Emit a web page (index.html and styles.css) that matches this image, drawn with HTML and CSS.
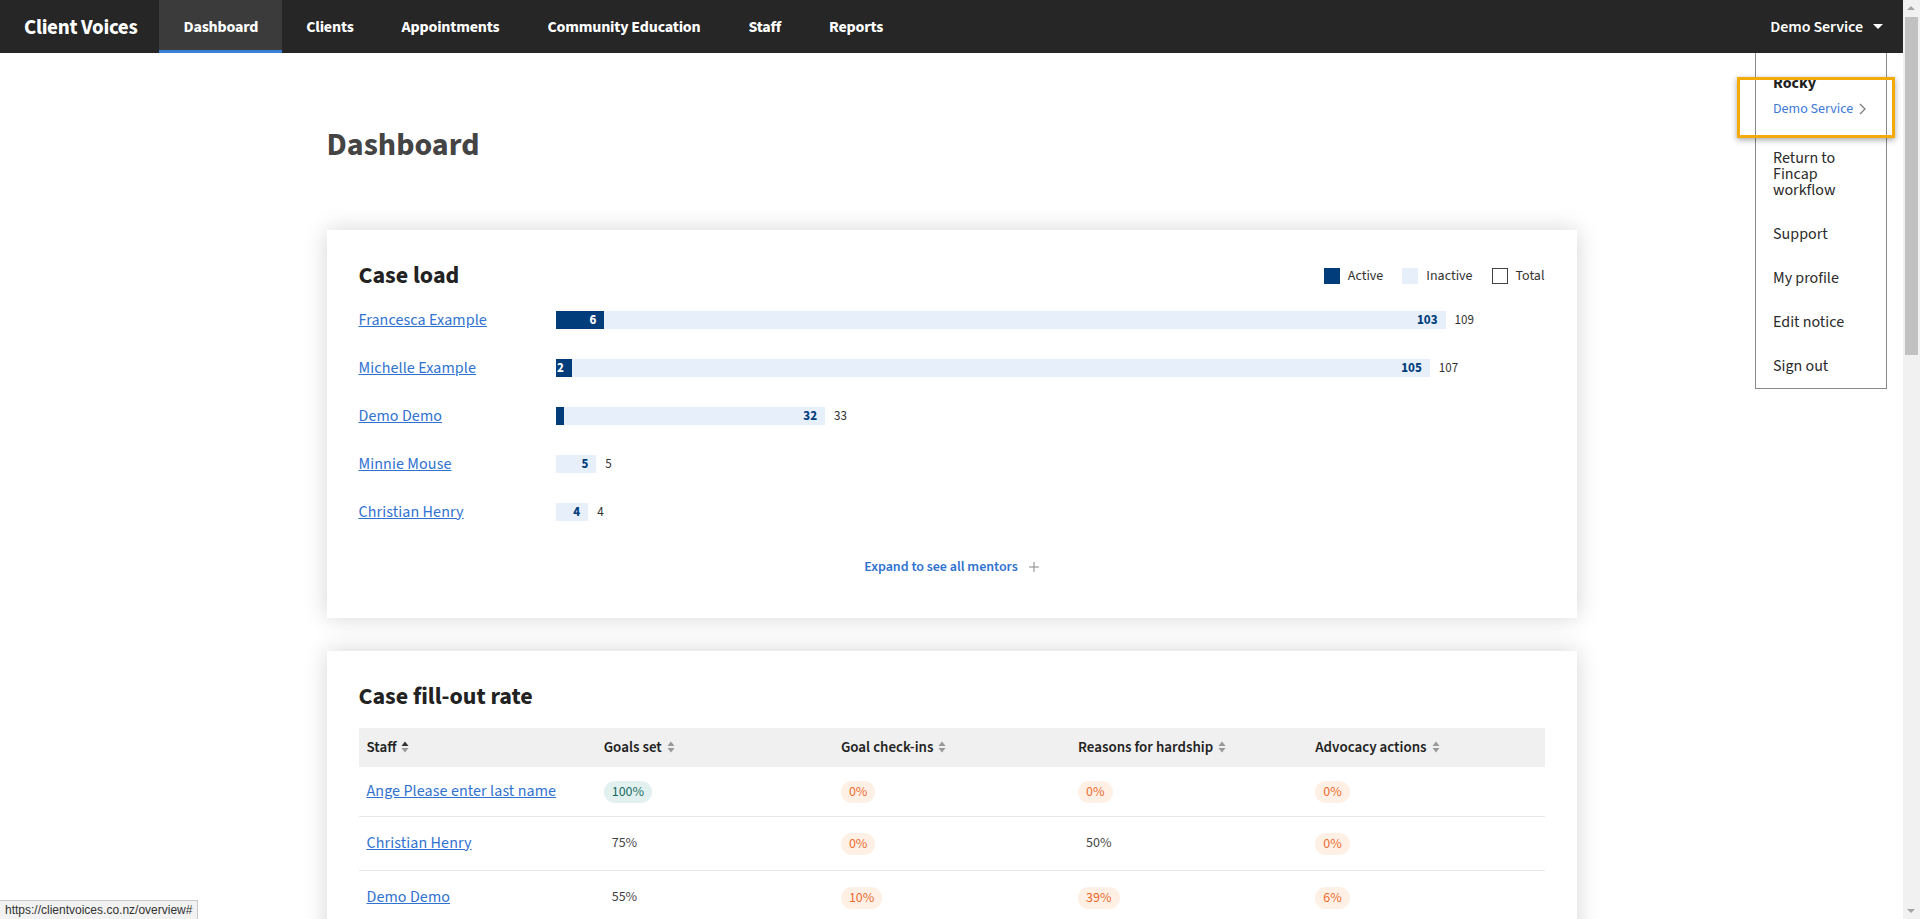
FILE: index.html
```html
<!DOCTYPE html>
<html lang="en">
<head>
<meta charset="utf-8">
<title>Dashboard - Client Voices</title>
<link rel="stylesheet" href="styles.css">
</head>
<body>
<div class="app">
<header class="topbar">
  <div class="brand">Client Voices</div>
  <nav class="tabs">
    <a class="tab active" href="#">Dashboard</a>
    <a class="tab" href="#">Clients</a>
    <a class="tab" href="#">Appointments</a>
    <a class="tab" href="#">Community Education</a>
    <a class="tab" href="#">Staff</a>
    <a class="tab" href="#">Reports</a>
  </nav>
  <div class="account">Demo Service <span class="caret"></span></div>
</header>

<div class="menu">
  <div class="menu-head">
    <div class="who">Rocky</div>
    <a class="svc" href="#">Demo Service <svg class="chev" width="7" height="12" viewBox="0 0 7 12"><path d="M1 1l5 5-5 5" fill="none" stroke="#777" stroke-width="1.2"/></svg></a>
  </div>
  <a class="menu-item" href="#">Return to Fincap workflow</a>
  <a class="menu-item" href="#">Support</a>
  <a class="menu-item" href="#">My profile</a>
  <a class="menu-item" href="#">Edit notice</a>
  <a class="menu-item" href="#">Sign out</a>
</div>
<div class="annot"></div>

<main class="page">
  <h1 class="title">Dashboard</h1>

  <section class="card">
    <div class="card-head">
      <h2 class="card-title">Case load</h2>
      <ul class="legend">
        <li class="legend-item"><span class="sw sw-active"></span>Active</li>
        <li class="legend-item"><span class="sw sw-inactive"></span>Inactive</li>
        <li class="legend-item"><span class="sw sw-total"></span>Total</li>
      </ul>
    </div>
    <div class="rows">
      <div class="row">
        <a class="name" href="#">Francesca Example</a>
        <div class="track">
          <div class="bar" style="width:90%"><div class="seg-active" style="width:5.5%">6</div><div class="seg-inactive">103</div></div>
          <span class="total">109</span>
        </div>
      </div>
      <div class="row">
        <a class="name" href="#">Michelle Example</a>
        <div class="track">
          <div class="bar" style="width:88.4%"><div class="seg-active" style="width:1.87%">2</div><div class="seg-inactive">105</div></div>
          <span class="total">107</span>
        </div>
      </div>
      <div class="row">
        <a class="name" href="#">Demo Demo</a>
        <div class="track">
          <div class="bar" style="width:27.26%"><div class="seg-active" style="width:3.03%"></div><div class="seg-inactive">32</div></div>
          <span class="total">33</span>
        </div>
      </div>
      <div class="row">
        <a class="name" href="#">Minnie Mouse</a>
        <div class="track">
          <div class="bar" style="width:4.13%"><div class="seg-inactive">5</div></div>
          <span class="total">5</span>
        </div>
      </div>
      <div class="row">
        <a class="name" href="#">Christian Henry</a>
        <div class="track">
          <div class="bar" style="width:3.3%"><div class="seg-inactive">4</div></div>
          <span class="total">4</span>
        </div>
      </div>
    </div>
    <div class="expand"><a class="expand-link" href="#">Expand to see all mentors</a><svg class="plus" width="10" height="10" viewBox="0 0 10 10"><path d="M5 0v10M0 5h10" stroke="#888" stroke-width="1"/></svg></div>
  </section>

  <section class="card">
    <h2 class="card-title">Case fill-out rate</h2>
    <table class="rate">
      <thead>
        <tr>
          <th>Staff <svg class="sort" width="8" height="12" viewBox="0 0 8 12"><path d="M4 0.5L7.5 5H0.5z" fill="#333"/><path d="M4 11.5L7.5 7H0.5z" fill="#999"/></svg></th>
          <th>Goals set <svg class="sort" width="8" height="12" viewBox="0 0 8 12"><path d="M4 0.5L7.5 5H0.5z" fill="#999"/><path d="M4 11.5L7.5 7H0.5z" fill="#999"/></svg></th>
          <th>Goal check-ins <svg class="sort" width="8" height="12" viewBox="0 0 8 12"><path d="M4 0.5L7.5 5H0.5z" fill="#999"/><path d="M4 11.5L7.5 7H0.5z" fill="#999"/></svg></th>
          <th>Reasons for hardship <svg class="sort" width="8" height="12" viewBox="0 0 8 12"><path d="M4 0.5L7.5 5H0.5z" fill="#999"/><path d="M4 11.5L7.5 7H0.5z" fill="#999"/></svg></th>
          <th>Advocacy actions <svg class="sort" width="8" height="12" viewBox="0 0 8 12"><path d="M4 0.5L7.5 5H0.5z" fill="#999"/><path d="M4 11.5L7.5 7H0.5z" fill="#999"/></svg></th>
        </tr>
      </thead>
      <tbody>
        <tr>
          <td><a class="tname" href="#">Ange Please enter last name</a></td>
          <td><span class="pill good">100%</span></td>
          <td><span class="pill bad">0%</span></td>
          <td><span class="pill bad">0%</span></td>
          <td><span class="pill bad">0%</span></td>
        </tr>
        <tr>
          <td><a class="tname" href="#">Christian Henry</a></td>
          <td><span class="plain">75%</span></td>
          <td><span class="pill bad">0%</span></td>
          <td><span class="plain">50%</span></td>
          <td><span class="pill bad">0%</span></td>
        </tr>
        <tr>
          <td><a class="tname" href="#">Demo Demo</a></td>
          <td><span class="plain">55%</span></td>
          <td><span class="pill bad">10%</span></td>
          <td><span class="pill bad">39%</span></td>
          <td><span class="pill bad">6%</span></td>
        </tr>
      </tbody>
    </table>
  </section>
</main>
</div>

<div class="scrollbar">
  <span class="sb-up"></span>
  <span class="sb-thumb"></span>
  <span class="sb-down"></span>
</div>
<div class="status">https://clientvoices.co.nz/overview#</div>
</body>
</html>
```

FILE: styles.css
```css
html, body {
  margin: 0;
  padding: 0;
}
body {
  font-family: "Source Sans Pro", "Source Sans 3", Lato, "Noto Sans", sans-serif;
  color: #333;
  background: #fff;
}
a { text-decoration: none; }

.app {
  position: relative;
  margin-right: 17px;
  min-height: 2400px;
}

/* top bar */
.topbar {
  display: flex;
  align-items: stretch;
  height: 53px;
  background: #262626;
  color: #fff;
}
.brand {
  display: flex;
  align-items: center;
  padding: 0 22px 0 24px;
  font-size: 21px;
  font-weight: 700;
  letter-spacing: -0.3px;
}
.tabs { display: flex; }
.tab {
  display: flex;
  align-items: center;
  padding: 0 24px;
  color: #fff;
  font-size: 16px;
  font-weight: 700;
  letter-spacing: -0.2px;
}
.tab.active {
  background: #3b3b3b;
  box-shadow: inset 0 -3px 0 #3b7ed6;
}
.account {
  margin-left: auto;
  display: flex;
  align-items: center;
  gap: 10px;
  padding: 0 20px;
  font-size: 16px;
  font-weight: 600;
  letter-spacing: -0.1px;
}
.caret {
  width: 0;
  height: 0;
  border-left: 5px solid transparent;
  border-right: 5px solid transparent;
  border-top: 5px solid #fff;
}

/* dropdown */
.menu {
  position: absolute;
  top: 53px;
  right: 16px;
  width: 132px;
  box-sizing: border-box;
  background: #fff;
  border: 1px solid #8a8a8a;
  border-top: none;
  font-size: 16px;
}
.menu-head {
  padding: 22px 17px 18px;
  border-bottom: 1px solid #cfcfcf;
}
.who {
  font-weight: 700;
  line-height: 16px;
  color: #222;
}
.svc {
  display: flex;
  align-items: center;
  gap: 6px;
  margin-top: 10px;
  font-size: 14px;
  line-height: 16px;
  color: #3b78d8;
}
.menu-item {
  display: block;
  padding: 14px 17px;
  line-height: 16px;
  color: #2a2a2a;
}
.annot {
  position: absolute;
  top: 77px;
  right: 8px;
  width: 158px;
  height: 61px;
  box-sizing: border-box;
  border: 3px solid #f5aa0c;
  box-shadow: 0 2px 6px rgba(0,0,0,0.35);
}

/* page */
.page {
  width: 1250px;
  margin: 0 auto;
  padding-top: 72px;
}
.title {
  margin: 0 0 65px;
  font-size: 32px;
  line-height: 40px;
  font-weight: 700;
  color: #444;
}
.card {
  background: #fff;
  box-shadow: 0 0 22px rgba(0,0,0,0.17);
  padding: 32px 32px 40px;
  margin-bottom: 33px;
}
.card-head {
  display: flex;
  justify-content: space-between;
  align-items: center;
}
.card-title {
  margin: 0;
  font-size: 24px;
  line-height: 28px;
  font-weight: 700;
  color: #222;
}
.legend {
  display: flex;
  gap: 19px;
  margin: 0;
  padding: 0;
  list-style: none;
  font-size: 14px;
  color: #333;
}
.legend-item {
  display: flex;
  align-items: center;
  gap: 8px;
}
.sw {
  width: 16px;
  height: 16px;
  box-sizing: border-box;
}
.sw-active { background: #003d7a; }
.sw-inactive { background: #e6effa; }
.sw-total { border: 1px solid #444; background: #fff; }

.rows { margin-top: 6px; }
.row {
  display: grid;
  grid-template-columns: 197px 1fr;
  align-items: center;
  height: 48px;
}
.name {
  font-size: 16px;
  color: #2f72d0;
  text-decoration: underline;
  letter-spacing: 0.1px;
}
.track {
  display: flex;
  align-items: center;
}
.bar {
  display: flex;
  height: 18px;
  background: #e6effa;
}
.seg-active {
  box-sizing: border-box;
  background: #003d7a;
  color: #fff;
  font-size: 13px;
  font-weight: 700;
  line-height: 18px;
  text-align: right;
  padding-right: 8px;
  overflow: hidden;
}
.seg-inactive {
  flex: 1;
  font-size: 13px;
  font-weight: 700;
  line-height: 18px;
  text-align: right;
  padding-right: 8px;
  color: #003d7a;
}
.total {
  margin-left: 9px;
  font-size: 13px;
  color: #333;
}
.expand {
  display: flex;
  justify-content: center;
  align-items: center;
  gap: 11px;
  margin-top: 20px;
  line-height: 22px;
}
.expand-link {
  font-size: 14px;
  font-weight: 600;
  color: #2f72d0;
}

/* table */
.rate {
  width: 100%;
  margin-top: 17px;
  border-collapse: collapse;
  table-layout: fixed;
}
.rate th {
  background: #f0f0f0;
  text-align: left;
  padding: 8px;
  font-size: 15px;
  font-weight: 600;
  line-height: 23px;
  color: #222;
}
.sort { vertical-align: -1px; margin-left: 2px; }
.rate td {
  padding: 13px 8px;
  border-bottom: 1px solid #e8e8e8;
  font-size: 14px;
  line-height: 22px;
  vertical-align: middle;
}
.tname {
  font-size: 16px;
  color: #2f72d0;
  text-decoration: underline;
  letter-spacing: 0.1px;
}
.pill {
  display: inline-block;
  vertical-align: top;
  padding: 0 8px;
  border-radius: 11px;
  line-height: 22px;
  font-size: 14px;
}
.good { background: #e2f1ef; color: #17695f; }
.bad { background: #fff0e5; color: #ec6a2c; }
.plain {
  display: inline-block;
  vertical-align: top;
  padding: 0 8px;
  line-height: 27px;
  font-size: 14px;
  color: #444;
}

/* browser scrollbar */
.scrollbar {
  position: fixed;
  top: 0;
  right: 0;
  bottom: 0;
  width: 17px;
  background: #f1f1f1;
}
.sb-thumb {
  position: absolute;
  top: 17px;
  left: 2px;
  width: 13px;
  height: 338px;
  background: #c1c1c1;
}
.sb-up, .sb-down {
  position: absolute;
  left: 4px;
  width: 0;
  height: 0;
  border-left: 4.5px solid transparent;
  border-right: 4.5px solid transparent;
}
.sb-up {
  top: 6px;
  border-bottom: 4.5px solid #a3a3a3;
}
.sb-down {
  bottom: 6px;
  border-top: 4.5px solid #a3a3a3;
}

/* browser status bubble */
.status {
  position: fixed;
  left: 0;
  bottom: 0;
  padding: 2px 5px;
  background: #f2f2f2;
  border: 1px solid #c8c8c8;
  border-left: none;
  border-bottom: none;
  font-family: "Liberation Sans", Arial, sans-serif;
  font-size: 12px;
  line-height: 14px;
  color: #333;
}
```
